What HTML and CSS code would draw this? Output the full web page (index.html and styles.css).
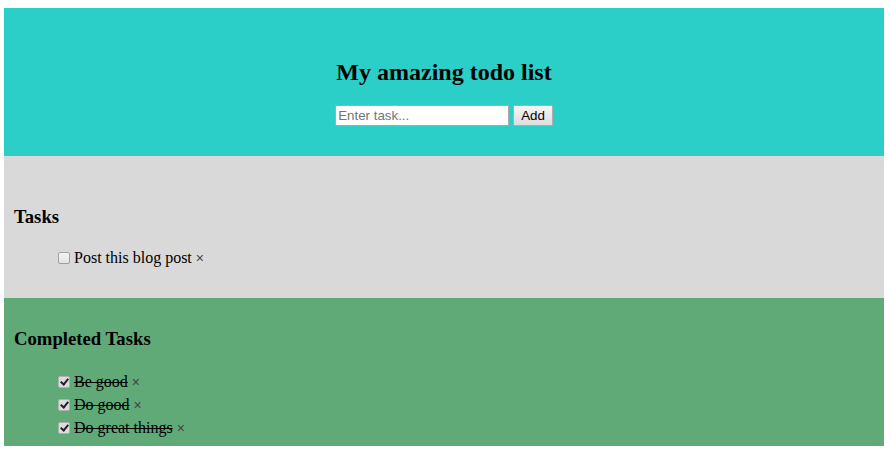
FILE: index.html
```html
<!DOCTYPE html>
<html>
<head>
  <meta charset="utf-8">
  <title>Todo</title>
  <link rel="stylesheet" href="styles.css">
</head>
<body>
  <div class="header">
    <h2>My amazing todo list</h2>
    <form class="add-form">
      <input type="text" id="new-task" placeholder="Enter task..."><button type="button" id="add-btn">Add</button>
    </form>
  </div>
  <div class="tasks">
    <h3>Tasks</h3>
    <ul>
      <li><input type="checkbox"> <label>Post this blog post</label> <span class="remove">&times;</span></li>
    </ul>
  </div>
  <div class="completed">
    <h3>Completed Tasks</h3>
    <ul>
      <li><input type="checkbox" checked> <label>Be good</label> <span class="remove">&times;</span></li>
      <li><input type="checkbox" checked> <label>Do good</label> <span class="remove">&times;</span></li>
      <li><input type="checkbox" checked> <label>Do great things</label> <span class="remove">&times;</span></li>
    </ul>
  </div>
</body>
</html>
```
FILE: styles.css
```css
body {
  margin: 8px 7px 12px 4px;
  font-family: "Liberation Serif", "Times New Roman", serif;
  font-size: 16px;
  color: #000;
}

.header {
  background: #2bcfc7;
  padding: 30px;
  text-align: center;
}
.header h2 {
  font-size: 24px;
  margin: 20.92px 0 18.92px;
}
.add-form {
  margin: 0;
  display: flex;
  justify-content: center;
  align-items: center;
  gap: 4px;
}
#new-task {
  width: 168px;
  height: 19px;
  padding: 0 2px;
  margin: 0;
  border: 1px solid #a9a9a9;
  font-family: "Liberation Sans", Arial, sans-serif;
  font-size: 13.33px;
}
#new-task::placeholder {
  color: #757575;
}
#add-btn {
  height: 21px;
  padding: 0 7px;
  margin: 0;
  border: 1px solid #adadad;
  border-radius: 1px;
  background: linear-gradient(#f6f6f6, #dddddd);
  font-family: "Liberation Sans", Arial, sans-serif;
  font-size: 13.33px;
  color: #000;
}

.tasks {
  background: #d9d9d9;
  padding: 31px 10px 29px;
}
.completed {
  background: #5faa77;
  padding: 11px 10px 7px;
}
h3 {
  font-size: 18.72px;
  margin: 18.72px 0;
}
ul {
  list-style: none;
  margin: 0;
  padding: 0 0 0 40px;
}
.completed ul {
  padding-top: 1px;
}
li {
  height: 23px;
  line-height: 23px;
}
li input[type="checkbox"] {
  appearance: none;
  -webkit-appearance: none;
  box-sizing: border-box;
  width: 12px;
  height: 12px;
  margin: 0 0 0 4px;
  border: 1px solid #a0a0a0;
  border-radius: 2px;
  background: linear-gradient(#f4f4f4, #e2e2e2);
  vertical-align: -1px;
  position: relative;
}
li input[type="checkbox"]:checked {
  background: #dcdcdc;
  border-color: #b0b0b0;
}
li input[type="checkbox"]:checked::after {
  content: "";
  position: absolute;
  left: 3px;
  top: 0;
  width: 3px;
  height: 6px;
  border-right: 2px solid #222;
  border-bottom: 2px solid #222;
  transform: rotate(40deg);
}
.completed label {
  text-decoration: line-through;
}
.remove {
  color: #444;
  font-family: "Liberation Sans", Arial, sans-serif;
  font-size: 14px;
  cursor: pointer;
}
```
